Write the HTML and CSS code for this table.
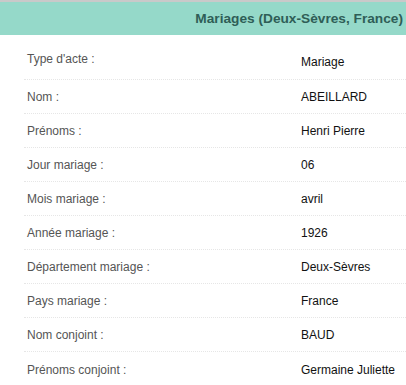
FILE: index.html
```html
<!DOCTYPE html>
<html lang="fr">
<head>
<meta charset="utf-8">
<link rel="stylesheet" href="styles.css">
</head>
<body>
<div class="header"><h1 class="title">Mariages (Deux-Sèvres, France)</h1></div>
<div class="list">
  <div class="row first"><span class="label">Type d'acte :</span><span class="value">Mariage</span></div>
  <div class="row"><span class="label">Nom :</span><span class="value">ABEILLARD</span></div>
  <div class="row"><span class="label">Prénoms :</span><span class="value">Henri Pierre</span></div>
  <div class="row"><span class="label">Jour mariage :</span><span class="value">06</span></div>
  <div class="row"><span class="label">Mois mariage :</span><span class="value">avril</span></div>
  <div class="row"><span class="label">Année mariage :</span><span class="value">1926</span></div>
  <div class="row"><span class="label">Département mariage :</span><span class="value">Deux-Sèvres</span></div>
  <div class="row"><span class="label">Pays mariage :</span><span class="value">France</span></div>
  <div class="row"><span class="label">Nom conjoint :</span><span class="value">BAUD</span></div>
  <div class="row"><span class="label">Prénoms conjoint :</span><span class="value">Germaine Juliette</span></div>
</div>
</body>
</html>
```
FILE: styles.css
```css
html, body {
  margin: 0;
  padding: 0;
  background: #fff;
  font-family: "Liberation Sans", Arial, sans-serif;
}
.header {
  border-top: 2px solid #c9c9c9;
  background: #95d9c9;
  height: 33px;
  display: flex;
  align-items: center;
  justify-content: flex-end;
  padding-right: 3px;
}
.title {
  margin: 0;
  font-size: 13.7px;
  font-weight: bold;
  color: #2f5e57;
  line-height: 16px;
}
.list {
  margin-left: 24px;
}
.row {
  display: grid;
  grid-template-columns: 277px 1fr;
  align-items: center;
  height: 33px;
  padding-top: 1px;
  box-sizing: border-box;
  border-bottom: 1px dotted #e6e6e6;
  font-size: 12px;
  line-height: 14px;
}
.row:not(.first) {
  height: 34px;
}
.row:last-child {
  border-bottom: none;
}
.label {
  padding-left: 3px;
  color: #555;
}
.value {
  color: #111;
}
.row.first {
  height: 45px;
  align-items: start;
  padding-top: 0;
}
.row.first .label {
  padding-top: 17px;
}
.row.first .value {
  padding-top: 20px;
}
```
